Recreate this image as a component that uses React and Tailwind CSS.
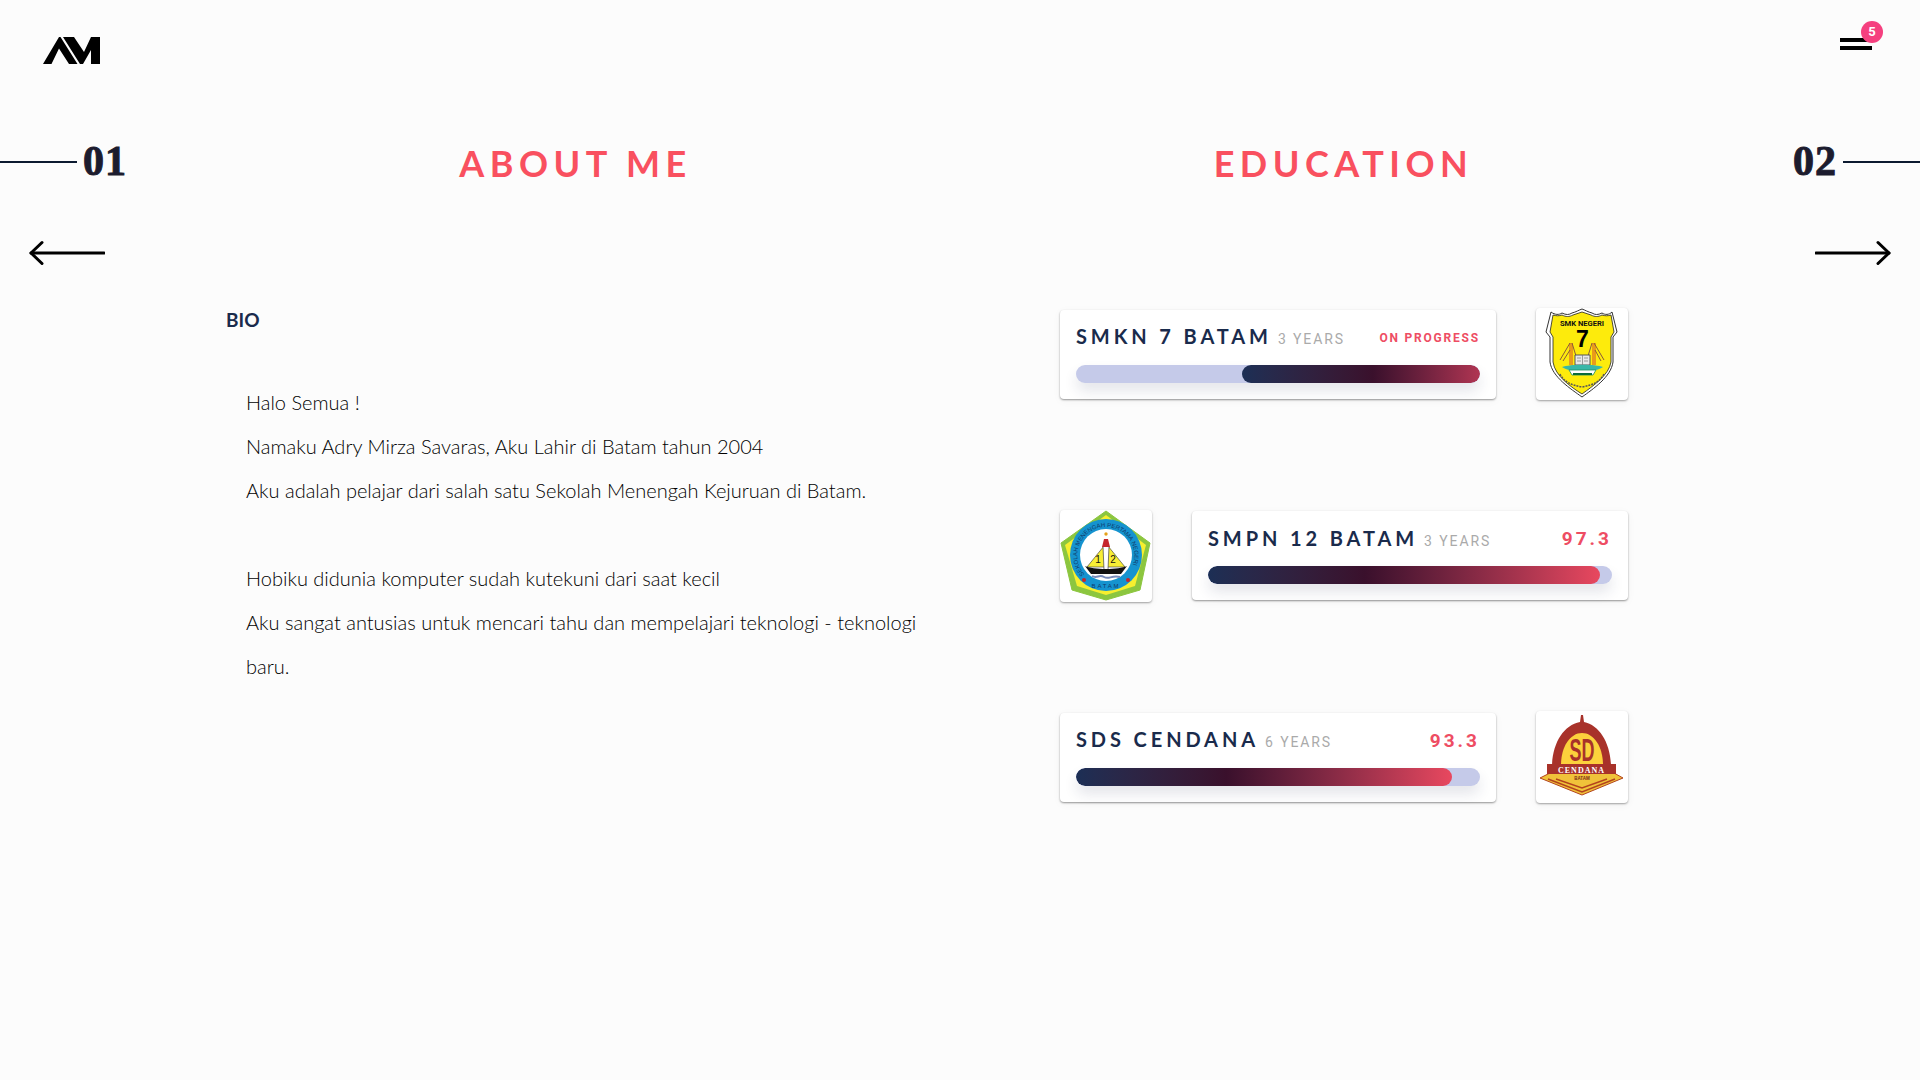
import React from 'react';

function Logo() {
    return (
        <svg width="58" height="28" viewBox="0 0 58 28" className="block">
            <polygon points="0,27 16,0 17.500,0 34.500,27 26,27 16,11.500 8.500,27" fill="#000" />
            <polygon points="20,0 31,0 41,15 48,0 57,0 57,27 48,27 48,13 40,27 37,27" fill="#000" />
        </svg>
    );
}

function Arrow({ flip }) {
    return (
        <svg width="76" height="26" viewBox="0 0 76 26" fill="none" stroke="#000" strokeWidth="3" strokeLinecap="round" strokeLinejoin="round" className={flip ? 'block -scale-x-100' : 'block'}>
            <path d="M75 13H2" />
            <path d="M13 2.500L2 13l11 10.500" />
        </svg>
    );
}

function SmkLogo() {
    return (
        <svg width="92" height="92" viewBox="0 0 92 92">
            <path d="M15 4c4 3 8 3 11 1 4 2 7 2 10 0 4-1 7-3 10-4 3 1 6 3 10 4 3 2 6 2 10 0 3 2 7 2 10-1l5 20-4 5v25c-2 15-20 27-31 35C35 81 16 69 14 54V29l-4-5z" fill="#fff" stroke="#333" strokeWidth="1" />
            <path d="M17 7c3 1 6 1 9 0 4 2 7 2 11 0l9-3 9 3c4 2 7 2 11 0 3 1 6 1 9 0l3 17-3 5v25c-2 13-18 24-29 32C35 79 19 68 17 54V29l-3-5z" fill="#fdeb0c" stroke="#222" strokeWidth=".8" />
            <text x="46" y="18" textAnchor="middle" fontFamily="Roboto, sans-serif" fontWeight="700" fontSize="7.600" fill="#111">SMK NEGERI</text>
            <text x="46.500" y="39" textAnchor="middle" fontFamily="Liberation Sans, sans-serif" fontWeight="700" fontSize="23" fill="#000">7</text>
            <path d="M34 35v22M36 35v22M57 35v22M59 35v22" stroke="#e2811f" strokeWidth="1.500" />
            <path d="M34 35 24 52M36 35 40 48M34 42 27 53M58 35 68 52M56 35 52 48M59 42 65 53" stroke="#8a5a3a" strokeWidth="1" />
            <path d="M39 47h15v10H39z" fill="#e8e8e8" stroke="#555" strokeWidth="1" />
            <path d="M46.500 47v10M41 50h4M41 53h4M48 50h4M48 53h4" stroke="#777" strokeWidth=".7" />
            <path d="M26 59c8-3 33-3 41 0-8 6-33 6-41 0z" fill="#39b7a8" />
            <path d="M33 62h27l-3 5H36z" fill="#fff" stroke="#1d8f62" strokeWidth=".8" />
            <path d="M37 66h19" stroke="#0a6b3c" strokeWidth="2" />
            <path d="M24 66c4 8 11 11 22 13 11-2 18-5 22-13" fill="none" stroke="#555" strokeWidth="1.500" strokeDasharray="2 1" />
        </svg>
    );
}

function SmpLogo() {
    return (
        <svg width="92" height="92" viewBox="0 0 92 92">
            <polygon points="46,1 90,33 80,80 46,90 12,80 1,33" fill="#8cc63f" stroke="#8cc63f" strokeWidth="1" strokeLinejoin="round" />
            <polygon points="46,5 86,35 75,76 46,85 17,76 5,35" fill="#f6ef2f" />
            <circle cx="46" cy="45" r="36" fill="#1593cf" />
            <circle cx="46" cy="45" r="26" fill="#fff" />
            <path id="smp-arc" d="M24.500 64.500A28.500 28.500 0 1 1 67.500 64" fill="none" />
            <text fontFamily="Liberation Sans, sans-serif" fontSize="6" fill="#103a6a">
                <textPath href="#smp-arc">SEKOLAH MENENGAH PERTAMA NEGERI</textPath>
            </text>
            <text x="46" y="78" textAnchor="middle" fontFamily="Liberation Sans, sans-serif" fontSize="6" letterSpacing="1.800" fill="#103a6a">BATAM</text>
            <circle cx="24" cy="70" r="2" fill="#c5262c" />
            <circle cx="68" cy="70" r="2" fill="#c5262c" />
            <polygon points="44,36 27,57 65,57 48,36" fill="#f8ee35" stroke="#333" strokeWidth=".6" />
            <polygon points="43,36 49,36 48,60 44,60" fill="#fff" stroke="#444" strokeWidth=".7" />
            <path d="M42 37h8l-2-8h-4z" fill="#c5262c" />
            <circle cx="46" cy="24" r="1.700" fill="#e5a11a" />
            <text x="38" y="53" textAnchor="middle" fontFamily="Liberation Sans, sans-serif" fontSize="10" fill="#111">1</text>
            <text x="53" y="53" textAnchor="middle" fontFamily="Liberation Sans, sans-serif" fontSize="10" fill="#111">2</text>
            <path d="M25 56c8 4 34 4 42 0l-6 8H31z" fill="#111" />
            <path d="M32 66c5 3 7-2 12 1s7-2 16 0" fill="none" stroke="#7689b8" strokeWidth="2" />
        </svg>
    );
}

function SdLogo() {
    return (
        <svg width="92" height="92" viewBox="0 0 92 92">
            <path d="M44 11l1-7h2l1 7c15 3 26 20 27 43H16c1-23 12-40 28-43z" fill="#a8322a" />
            <path d="M46 22c12 0 21 14 21 32H25c0-18 9-32 21-32z" fill="#fcd13c" />
            <text x="46" y="50" textAnchor="middle" fontFamily="Liberation Sans, sans-serif" fontWeight="700" fontSize="32" fill="#a8322a" textLength="25" lengthAdjust="spacingAndGlyphs">SD</text>
            <polygon points="4,67 14,62 78,62 87,67 46,84" fill="#f0c23a" stroke="#b3431e" strokeWidth="1" />
            <path d="M12 68 46 81 79 68M20 68 46 77 71 68" fill="none" stroke="#b3431e" strokeWidth="1.500" />
            <rect x="11" y="53" width="69" height="10" fill="#a8322a" />
            <text x="45.500" y="61.500" textAnchor="middle" fontFamily="Liberation Serif, serif" fontWeight="700" fontSize="8" letterSpacing="1" fill="#fff">CENDANA</text>
            <text x="46" y="69" textAnchor="middle" fontFamily="Liberation Sans, sans-serif" fontWeight="700" fontSize="4.500" fill="#7a2a18">BATAM</text>
        </svg>
    );
}

function LogoCard({ children }) {
    return (
        <div className="h-[92px] w-[92px] shrink-0 rounded-[4px] bg-white shadow-[0_1px_2px_rgba(0,0,0,0.35),0_2px_8px_rgba(0,0,0,0.05)]">
            {children}
        </div>
    );
}

function EducationCard({ name, years, note, noteClass, fillClass }) {
    return (
        <div className="w-[436px] shrink-0 rounded-[4px] bg-white px-[16px] pt-[14px] pb-[16px] shadow-[0_1px_2px_rgba(0,0,0,0.4),0_2px_10px_rgba(0,0,0,0.04)]">
            <div className="flex h-[25px] items-center justify-between">
                <div className="flex items-baseline">
                    <span className="text-[20px] font-bold tracking-[3.900px] text-[#1a2b4c]">{name}</span>
                    <span className="ml-[6px] font-['Roboto',sans-serif] text-[14px] tracking-[1.900px] text-[#aaaaaa]">{years}</span>
                </div>
                <span className={noteClass}>{note}</span>
            </div>
            <div className="mt-[16px] h-[18px] overflow-hidden rounded-full bg-[#c5cae9] shadow-[0_8px_14px_rgba(30,45,80,0.12)]">
                <div className={fillClass} />
            </div>
        </div>
    );
}

const scoreClass = "pt-[4px] font-['Roboto',sans-serif] text-[19px] font-bold tracking-[3px] text-[#ee4d63]";
const numberClass = "-mt-[2px] font-['Liberation_Serif',serif] text-[42px] leading-[40px] font-bold tracking-[1px] text-[#1c1c2e] [-webkit-text-stroke:1px_#1c1c2e]";

export default function App() {
    return (
        <div className="h-[1080px] w-[1920px] overflow-hidden bg-[#fcfcfc] font-['Lato',sans-serif]">
            <header className="flex items-start justify-between pt-[37px] pr-[48px] pl-[43px]">
                <Logo />
                <div className="relative w-[32px] pt-[1px]">
                    <div className="h-[4px] w-full bg-black" />
                    <div className="mt-[4px] h-[4px] w-full bg-black" />
                    <span className="absolute -top-[16px] left-[21px] flex h-[22px] w-[22px] items-center justify-center rounded-full bg-[#f5407f] font-['Roboto',sans-serif] text-[13px] font-bold text-white">5</span>
                </div>
            </header>

            <div className="mt-[78px] grid grid-cols-[190px_768px_768px_194px] items-center">
                <div className="-mt-[2px] flex items-center">
                    <div className="h-[2px] w-[77px] bg-[#0c1a30]" />
                    <span className={`ml-[6px] ${numberClass}`}>01</span>
                </div>
                <h2 className="pl-[3px] text-center text-[36px] leading-[40px] font-bold tracking-[5.500px] text-[#f9505f]">ABOUT ME</h2>
                <h2 className="pl-[3px] text-center text-[36px] leading-[40px] font-bold tracking-[5.500px] text-[#f9505f]">EDUCATION</h2>
                <div className="-mt-[2px] flex items-center justify-end">
                    <span className={`mr-[6px] ${numberClass}`}>02</span>
                    <div className="h-[2px] w-[77px] bg-[#0c1a30]" />
                </div>
            </div>

            <div className="mt-[57px] flex justify-between px-[29px]">
                <Arrow />
                <Arrow flip />
            </div>

            <div className="mt-[42px] grid grid-cols-[190px_768px_768px_194px]">
                <div />
                <div className="pl-[36px]">
                    <h3 className="text-[19px] leading-[24px] font-bold text-[#1a2b4c]">BIO</h3>
                    <div className="mt-[48px] w-[710px] pl-[20px] text-[20px] leading-[44px] font-light text-[#000000]">
                        <p>Halo Semua !</p>
                        <p>Namaku Adry Mirza Savaras, Aku Lahir di Batam tahun 2004</p>
                        <p>Aku adalah pelajar dari salah satu Sekolah Menengah Kejuruan di Batam.</p>
                        <p className="mt-[44px]">Hobiku didunia komputer sudah kutekuni dari saat kecil</p>
                        <p>Aku sangat antusias untuk mencari tahu dan mempelajari teknologi - teknologi baru.</p>
                    </div>
                </div>
                <div className="ml-[102px] flex w-[568px] flex-col gap-[109.500px]">
                    <div className="flex items-center justify-between">
                        <EducationCard
                            name="SMKN 7 BATAM"
                            years="3 YEARS"
                            note="ON PROGRESS"
                            noteClass="pt-[4px] font-['Roboto',sans-serif] text-[12px] font-bold tracking-[1.800px] text-[#ee4d63]"
                            fillClass="ml-[166px] h-full rounded-full bg-gradient-to-r from-[#1c2f55] via-[#3a102c] via-55% to-[#b03552]"
                        />
                        <LogoCard><SmkLogo /></LogoCard>
                    </div>
                    <div className="flex items-center justify-between">
                        <LogoCard><SmpLogo /></LogoCard>
                        <EducationCard
                            name="SMPN 12 BATAM"
                            years="3 YEARS"
                            note="97.3"
                            noteClass={scoreClass}
                            fillClass="h-full w-[97%] rounded-full bg-gradient-to-r from-[#1c2f55] via-[#3a102c] via-40% to-[#e8485f]"
                        />
                    </div>
                    <div className="flex items-center justify-between">
                        <EducationCard
                            name="SDS CENDANA"
                            years="6 YEARS"
                            note="93.3"
                            noteClass={scoreClass}
                            fillClass="h-full w-[93%] rounded-full bg-gradient-to-r from-[#1c2f55] via-[#3a102c] via-40% to-[#e8485f]"
                        />
                        <LogoCard><SdLogo /></LogoCard>
                    </div>
                </div>
            </div>
        </div>
    );
}
